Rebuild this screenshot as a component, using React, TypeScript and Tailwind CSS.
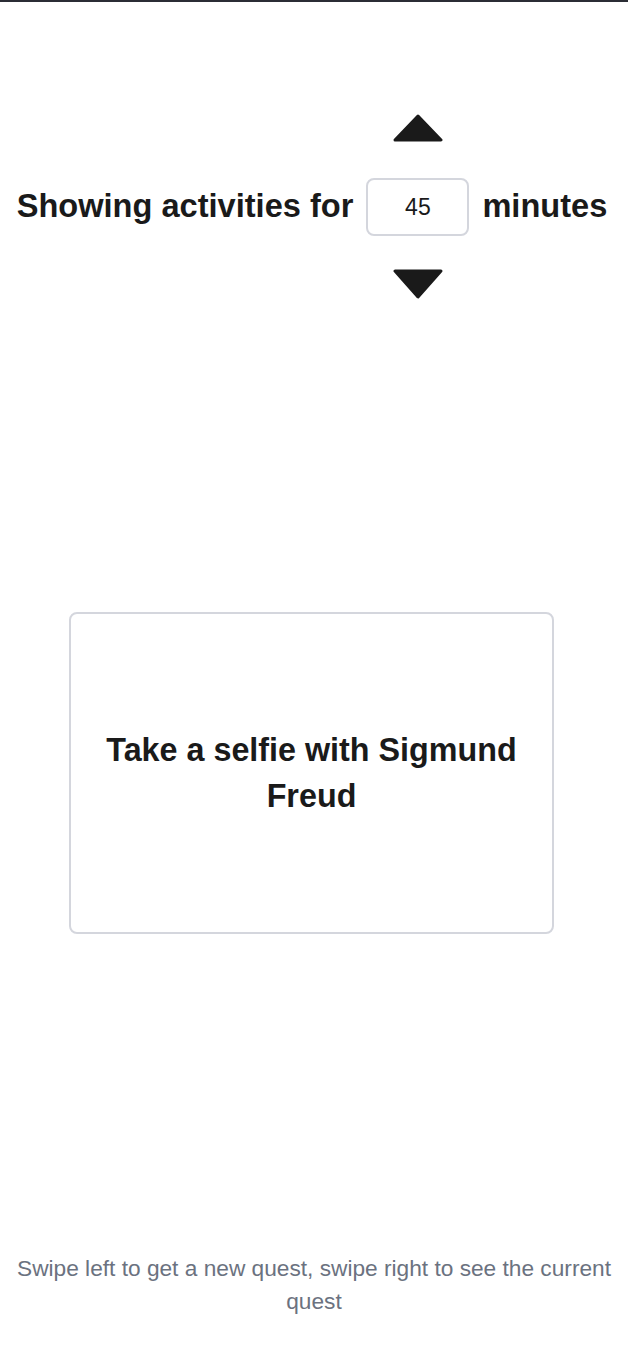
import { useState } from "react";

function Arrow({ dir }: { dir: "up" | "down" }) {
  return dir === "up" ? (
    <svg width="52" height="28" viewBox="0 0 52 28" className="block">
      <polygon
        points="3,26 26,2 49,26"
        fill="#1a1a1a"
        stroke="#1a1a1a"
        strokeWidth="3"
        strokeLinejoin="round"
      />
    </svg>
  ) : (
    <svg width="52" height="30" viewBox="0 0 52 30" className="block">
      <polygon
        points="3,2 49,2 26,28"
        fill="#1a1a1a"
        stroke="#1a1a1a"
        strokeWidth="3"
        strokeLinejoin="round"
      />
    </svg>
  );
}

export default function App() {
  const [minutes, setMinutes] = useState(45);

  return (
    <div className="min-h-[1364px] flex flex-col bg-white text-[#1a1a1a] font-['Liberation_Sans',Arial,sans-serif]">
      <div className="h-[2px] bg-[#2b2d35]" />

      <div className="flex items-center justify-center gap-[13px] pt-[112px] pr-[4px]">
        <span className="text-[32.6px] font-bold">Showing activities for</span>
        <div className="flex flex-col items-center">
          <button type="button" onClick={() => setMinutes((m) => m + 5)}>
            <Arrow dir="up" />
          </button>
          <input
            value={minutes}
            onChange={(e) => setMinutes(Number(e.target.value) || 0)}
            className="mt-[36px] mb-[33px] w-[103px] h-[58px] border-2 border-[#d4d6dd] rounded-lg text-center text-[23px] text-[#1a1a1a] outline-none"
          />
          <button
            type="button"
            onClick={() => setMinutes((m) => Math.max(0, m - 5))}
          >
            <Arrow dir="down" />
          </button>
        </div>
        <span className="text-[32.6px] font-bold">minutes</span>
      </div>

      <div className="mt-[313px] ml-[69px] w-[485px] h-[322px] border-2 border-[#d4d6dd] rounded-lg flex items-center justify-center px-8 text-center text-[32.3px] font-bold leading-[46px]">
        Take a selfie with Sigmund Freud
      </div>

      <p className="mt-auto pb-[46px] px-2 text-center text-[22.7px] leading-[33px] text-[#6b7280]">
        Swipe left to get a new quest, swipe right to see the current quest
      </p>
    </div>
  );
}
